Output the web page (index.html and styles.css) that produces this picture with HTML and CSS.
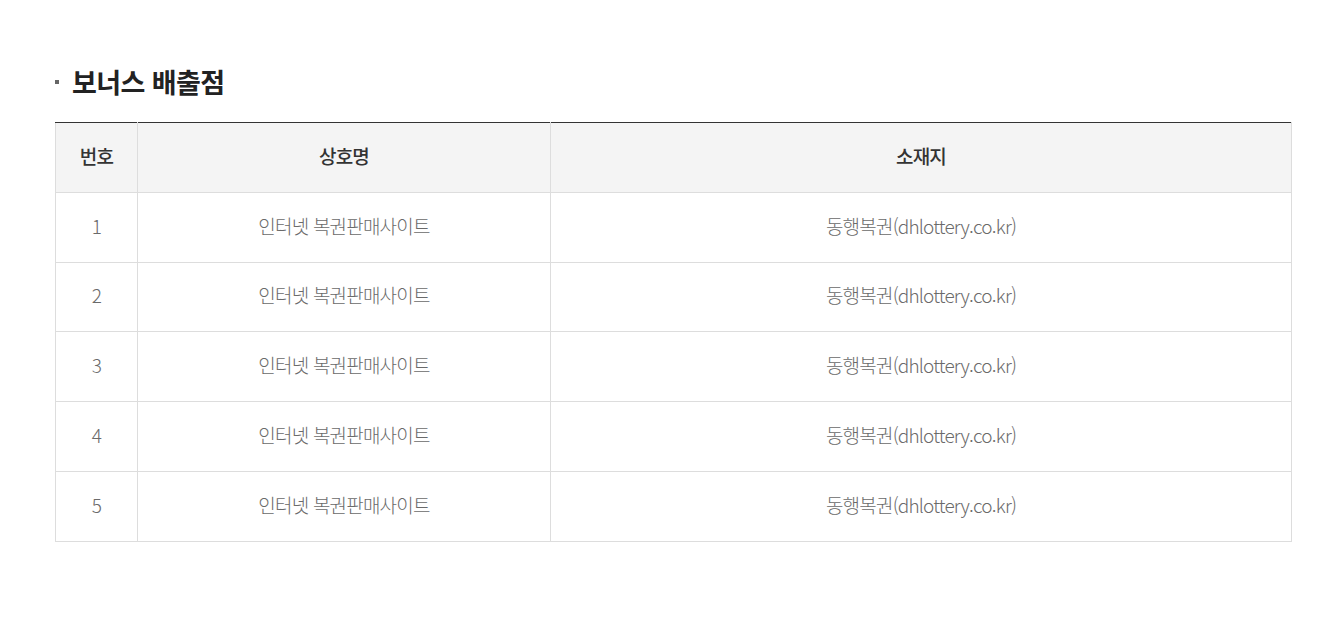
FILE: index.html
```html
<!DOCTYPE html>
<html lang="ko">
<head>
    <meta charset="UTF-8">
    <title>보너스 배출점</title>
    <link rel="stylesheet" href="styles.css">
</head>
<body>
    <div class="container">
        <h3 class="title">보너스 배출점</h3>
        <table class="store-table">
            <colgroup>
                <col class="col-no">
                <col class="col-name">
                <col>
            </colgroup>
            <thead>
                <tr>
                    <th>번호</th>
                    <th>상호명</th>
                    <th>소재지</th>
                </tr>
            </thead>
            <tbody>
                <tr><td>1</td><td>인터넷 복권판매사이트</td><td>동행복권(dhlottery.co.kr)</td></tr>
                <tr><td>2</td><td>인터넷 복권판매사이트</td><td>동행복권(dhlottery.co.kr)</td></tr>
                <tr><td>3</td><td>인터넷 복권판매사이트</td><td>동행복권(dhlottery.co.kr)</td></tr>
                <tr><td>4</td><td>인터넷 복권판매사이트</td><td>동행복권(dhlottery.co.kr)</td></tr>
                <tr><td>5</td><td>인터넷 복권판매사이트</td><td>동행복권(dhlottery.co.kr)</td></tr>
            </tbody>
        </table>
    </div>
</body>
</html>
```

FILE: styles.css
```css
body {
    margin: 0;
    background: #fff;
    font-family: "Noto Sans CJK KR", "Noto Sans", sans-serif;
}
.container {
    padding: 62px 39px 0 55px;
}
.title {
    position: relative;
    margin: 0 0 20px;
    padding-left: 17px;
    font-size: 27px;
    line-height: 40px;
    font-weight: 700;
    color: #222;
    letter-spacing: -0.6px;
}
.title::before {
    content: "";
    position: absolute;
    left: 0;
    top: 18px;
    width: 4px;
    height: 4px;
    background: #666;
}
.store-table {
    width: 100%;
    border-collapse: collapse;
    border-top: 1px solid #333;
    table-layout: fixed;
}
.col-no { width: 82px; }
.col-name { width: 413px; }
.store-table th,
.store-table td {
    height: 64.8px;
    padding: 0 0 4px;
    border: 1px solid #ddd;
    text-align: center;
    font-size: 19px;
    letter-spacing: -0.8px;
}
.store-table th {
    background: #f4f4f4;
    color: #333;
    font-weight: 500;
    border-top-color: #333;
}
.store-table td {
    color: #6a6a6a;
    font-weight: 300;
}
```
